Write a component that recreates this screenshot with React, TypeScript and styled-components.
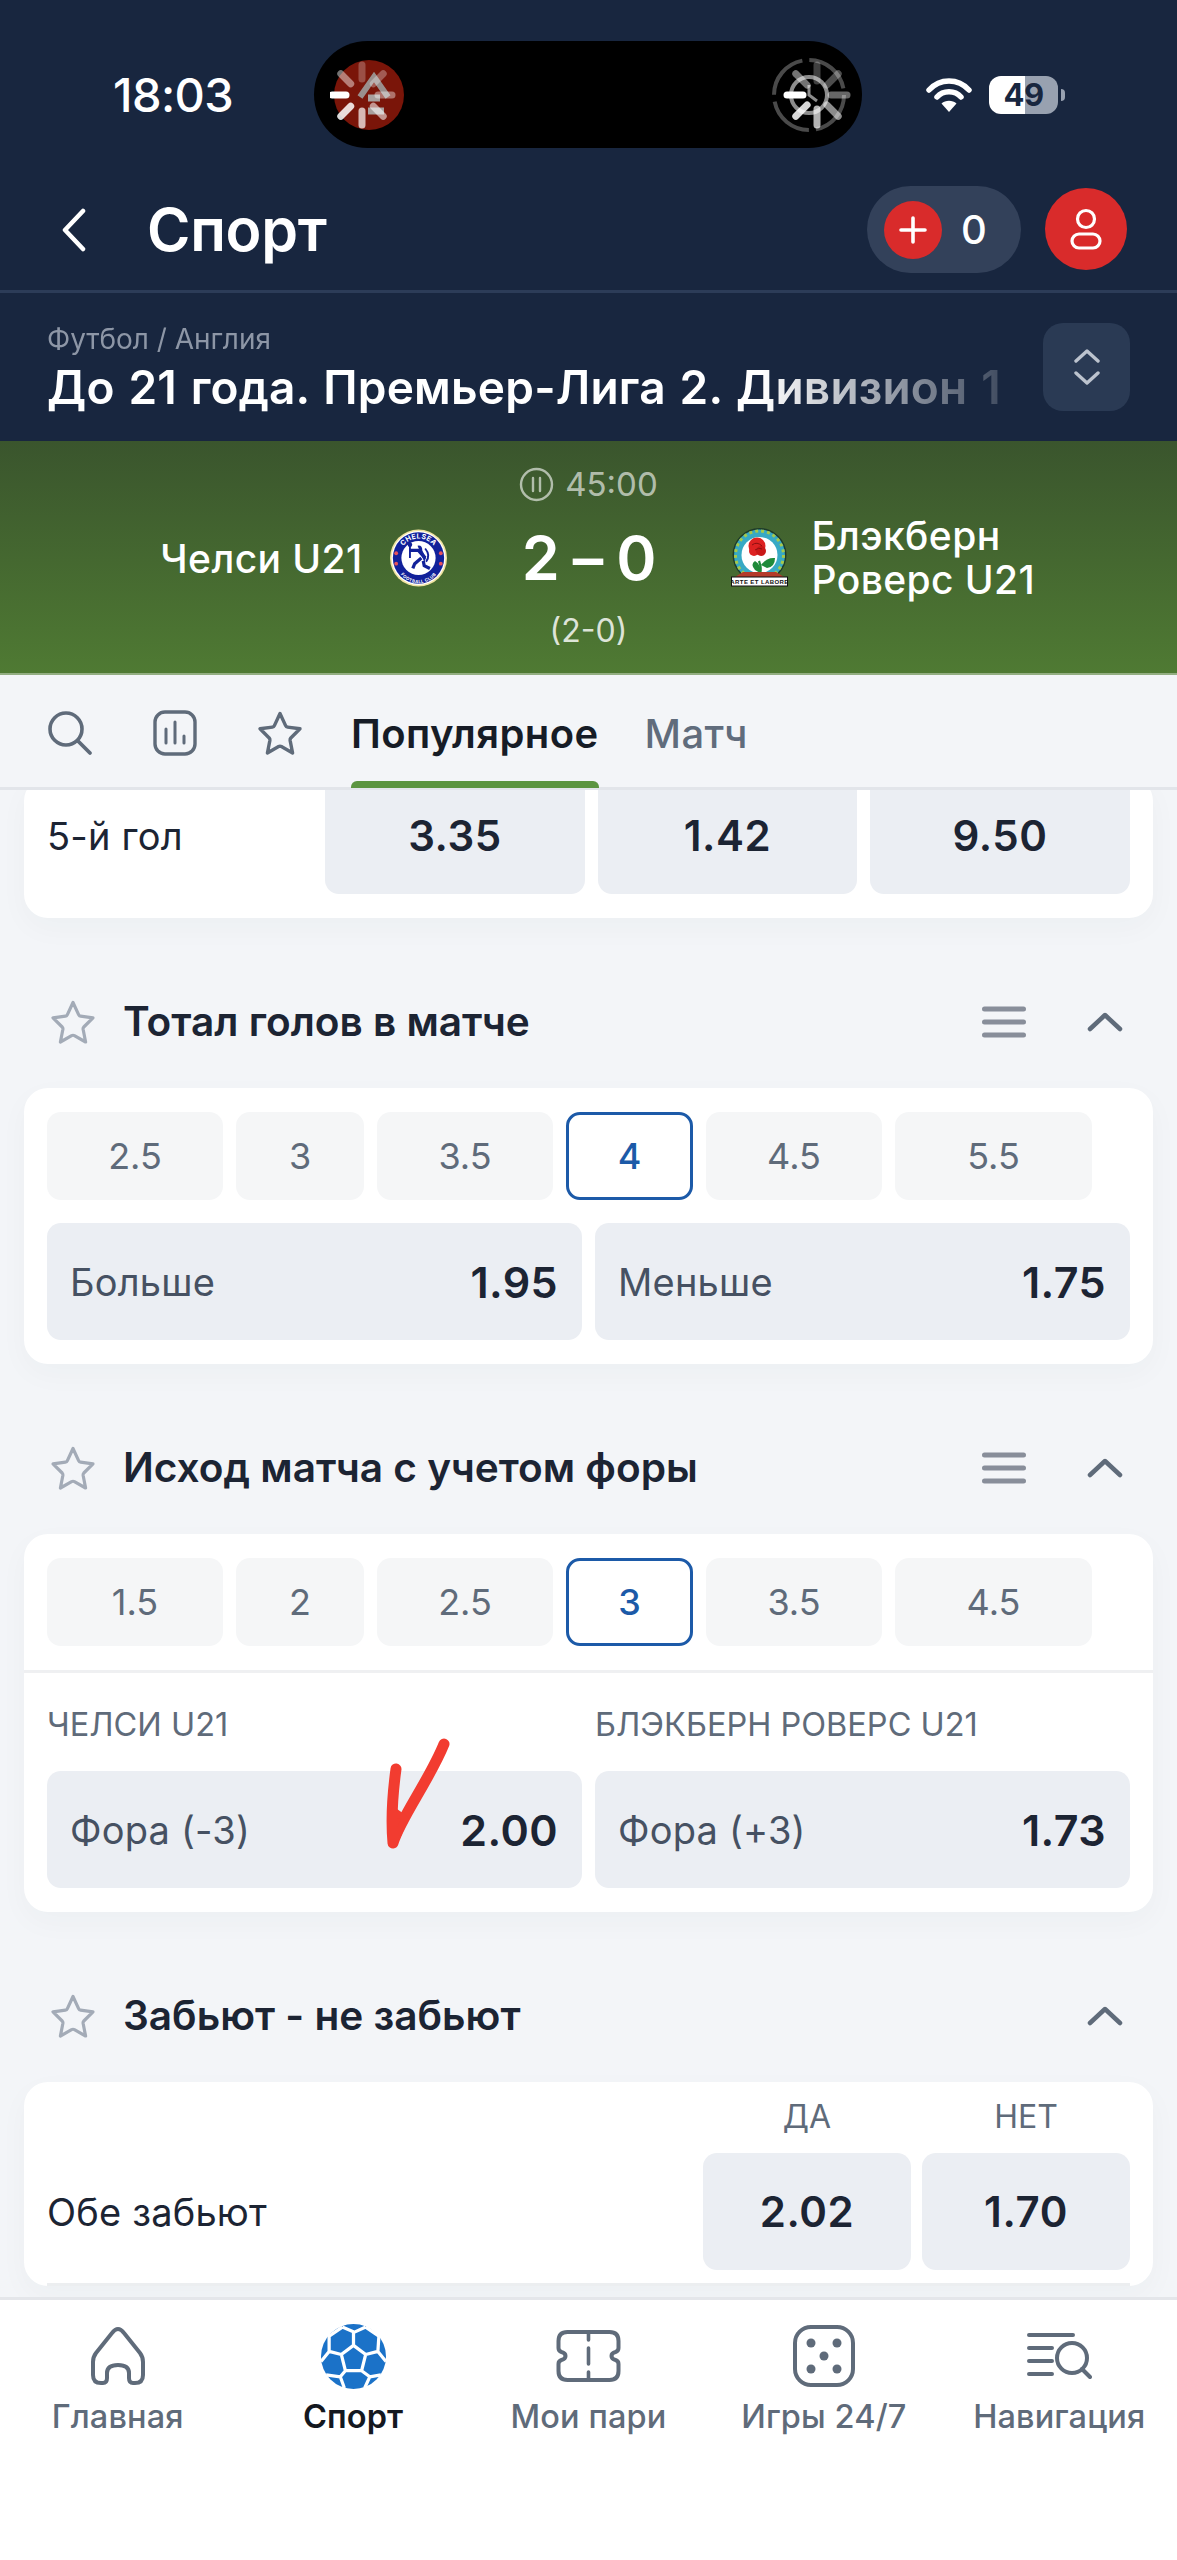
import React from "react";
import styled, { createGlobalStyle } from "styled-components";

const Global = createGlobalStyle`
  * { box-sizing: border-box; }
  html, body { margin: 0; padding: 0; background: #fff; }
  body { font-family: Inter, "Noto Sans", "Liberation Sans", sans-serif; }
`;

const Page = styled.div`
  width: 1177px;
  height: 2560px;
  display: flex;
  flex-direction: column;
  overflow: hidden;
  background: #f3f5f8;
`;

const TopDark = styled.header`
  background: #18263f;
  color: #fff;
  flex: none;
`;

const StatusBar = styled.div`
  height: 170px;
  display: flex;
  align-items: flex-start;
  padding: 41px 0 0 113px;
`;

const Time = styled.div`
  width: 201px;
  font-size: 47px;
  font-weight: 500;
  line-height: 107px;
  letter-spacing: -0.6px;
`;

const Island = styled.div`
  width: 548px;
  height: 107px;
  border-radius: 54px;
  background: #000;
  display: flex;
  align-items: center;
  justify-content: space-between;
  padding: 0 0 0 16px;
`;

const StatusIcons = styled.div`
  height: 107px;
  margin-left: 64px;
  display: flex;
  align-items: center;
  gap: 17px;
`;

const Battery = styled.div`
  position: relative;
  width: 69px;
  height: 38px;
  border-radius: 12px;
  background: linear-gradient(to right, #fff 0 52%, #98a1b0 52% 100%);
  color: #18263f;
  font-size: 31px;
  font-weight: 700;
  display: flex;
  align-items: center;
  justify-content: center;
  letter-spacing: -0.5px;
  &::after {
    content: "";
    position: absolute;
    right: -7px;
    top: 13px;
    width: 4px;
    height: 12px;
    border-radius: 0 4px 4px 0;
    background: #98a1b0;
  }
`;

const NavBar = styled.div`
  height: 123px;
  display: flex;
  align-items: flex-start;
  padding: 16px 50px 0 62px;
  border-bottom: 3px solid #2c3c58;
`;

const BackIcon = styled.svg`
  width: 24px;
  height: 44px;
  margin-top: 22px;
  flex: none;
`;

const PageTitle = styled.h1`
  margin: 0 0 0 61px;
  font-size: 59px;
  line-height: 88px;
  font-weight: 600;
  letter-spacing: -0.3px;
  flex: 1;
`;

const BalancePill = styled.div`
  width: 154px;
  height: 87px;
  border-radius: 44px;
  background: #33415a;
  display: flex;
  align-items: center;
  padding-left: 17px;
  gap: 19px;
  font-size: 40px;
  font-weight: 500;
`;

const RedRound = styled.div<{ $size: number }>`
  width: ${(p) => p.$size}px;
  height: ${(p) => p.$size}px;
  border-radius: 50%;
  background: #d92b2b;
  display: flex;
  align-items: center;
  justify-content: center;
  flex: none;
`;

const ProfileSlot = styled.div`
  margin-left: 24px;
  margin-top: 2px;
`;

const SubHeader = styled.div`
  height: 148px;
  display: flex;
  align-items: flex-start;
  padding: 28px 47px 0 47px;
`;

const CrumbBlock = styled.div`
  width: 965px;
  flex: none;
  white-space: nowrap;
  -webkit-mask-image: linear-gradient(to right, #000 0, #000 74%, rgba(0, 0, 0, 0.14) 100%);
  mask-image: linear-gradient(to right, #000 0, #000 74%, rgba(0, 0, 0, 0.14) 100%);
`;

const Crumb = styled.div`
  font-size: 28px;
  line-height: 36px;
  color: #8d96a6;
`;

const League = styled.div`
  font-size: 46px;
  line-height: 54px;
  margin-top: 3px;
  font-weight: 600;
  letter-spacing: 0.2px;
  word-spacing: 2px;
`;

const ExpandBtn = styled.div`
  width: 87px;
  height: 88px;
  margin: 2px 0 0 31px;
  border-radius: 20px;
  background: #2a3a54;
  display: flex;
  align-items: center;
  justify-content: center;
`;

const Banner = styled.section`
  flex: none;
  height: 234px;
  padding-top: 25px;
  background: linear-gradient(to bottom, #3a552d, #4f7a33);
  border-bottom: 2px solid #93ae82;
  color: #fff;
  display: flex;
  flex-direction: column;
  align-items: center;
`;

const Timer = styled.div`
  height: 36px;
  display: flex;
  align-items: center;
  gap: 11px;
  font-size: 33px;
  color: rgba(255, 255, 255, 0.62);
`;

const ScoreRow = styled.div`
  height: 112px;
  width: 100%;
  display: grid;
  grid-template-columns: 1fr auto 1fr;
  column-gap: 76px;
  align-items: center;
`;

const TeamLeft = styled.div`
  display: flex;
  justify-content: flex-end;
  align-items: center;
  gap: 27px;
  font-size: 39px;
  letter-spacing: 0.4px;
  font-weight: 500;
`;

const TeamRight = styled.div`
  display: flex;
  align-items: center;
  gap: 24px;
  font-size: 39px;
  letter-spacing: 0.4px;
  line-height: 44px;
  font-weight: 500;
`;

const Score = styled.div`
  font-size: 61px;
  font-weight: 600;
  width: 132px;
  display: flex;
  justify-content: center;
  white-space: pre;
  letter-spacing: -1.2px;
`;

const SubScore = styled.div`
  font-size: 32px;
  line-height: 34px;
  color: rgba(255, 255, 255, 0.82);
`;

const Tabs = styled.nav`
  flex: none;
  height: 115px;
  background: #f3f5f8;
  border-bottom: 3px solid #e2e5ea;
  display: flex;
  align-items: center;
  padding: 4px 0 0 47px;
`;

const TabIcon = styled.svg<{ $gap: number }>`
  flex: none;
  margin-right: ${(p) => p.$gap}px;
`;

const Tab = styled.div<{ $active?: boolean }>`
  position: relative;
  height: 100%;
  display: flex;
  align-items: center;
  margin-right: 46px;
  font-size: 40px;
  letter-spacing: 0.4px;
  font-weight: ${(p) => (p.$active ? 600 : 500)};
  color: ${(p) => (p.$active ? "#161c26" : "#606c7c")};
  ${(p) =>
    p.$active
      ? `margin-left: 48px;
  &::after {
    content: "";
    position: absolute;
    left: 0; right: 0; bottom: -1px;
    height: 7px;
    border-radius: 6px 6px 0 0;
    background: #5b9540;
  }`
      : ""}
`;

const Scroller = styled.main`
  flex: 1;
  min-height: 0;
  overflow: hidden;
`;

const ScrollInner = styled.div`
  margin-top: -13px;
  padding: 0 24px;
`;

const Card = styled.div`
  background: #fff;
  border-radius: 24px;
  box-shadow: 0 10px 30px rgba(40, 50, 70, 0.03);
`;

const CardPad = styled.div`
  padding: 24px 23px;
`;

const TopRowPad = styled.div`
  padding: 0 23px 24px;
  display: flex;
  align-items: center;
`;

const RowLabel = styled.div`
  font-size: 38px;
  letter-spacing: 0.2px;
  color: #1c2433;
  flex: 1;
`;

const OddsCell = styled.div<{ $w: number }>`
  width: ${(p) => p.$w}px;
  height: 117px;
  border-radius: 14px;
  background: #ebeef3;
  display: flex;
  align-items: center;
  justify-content: center;
  margin-left: 13px;
  font-size: 42px;
  letter-spacing: 0.6px;
  font-weight: 600;
  color: #1c2433;
  flex: none;
`;

const SectionHead = styled.div`
  margin-top: 37px;
  height: 133px;
  display: flex;
  align-items: center;
  padding-left: 26px;
`;

const SectionTitle = styled.h2`
  margin: 0 0 0 27px;
  flex: 1;
  font-size: 40.6px;
  font-weight: 600;
  color: #1c2433;
`;

const HeadIcon = styled.svg<{ $mr: number }>`
  flex: none;
  margin-right: ${(p) => p.$mr}px;
`;

const Chips = styled.div`
  display: flex;
  gap: 13px;
`;

const Chip = styled.div<{ $w: number; $on?: boolean }>`
  width: ${(p) => p.$w}px;
  height: 88px;
  border-radius: 14px;
  background: ${(p) => (p.$on ? "#fff" : "#f5f6f7")};
  border: ${(p) => (p.$on ? "3px solid #1c5aa8" : "none")};
  color: ${(p) => (p.$on ? "#1c5aa8" : "#5f6b7a")};
  display: flex;
  align-items: center;
  justify-content: center;
  font-size: 36px;
  font-weight: ${(p) => (p.$on ? 500 : 400)};
  flex: none;
`;

const Pair = styled.div<{ $mt: number }>`
  margin-top: ${(p) => p.$mt}px;
  display: grid;
  grid-template-columns: 535px 535px;
  column-gap: 13px;
`;

const OutcomeBtn = styled.div`
  position: relative;
  height: 117px;
  border-radius: 14px;
  background: #ebeef3;
  display: flex;
  align-items: center;
  justify-content: space-between;
  padding: 0 24px 0 23px;
`;

const OutcomeLabel = styled.span`
  font-size: 38px;
  letter-spacing: 0.2px;
  color: #465162;
`;

const OutcomeValue = styled.span`
  font-size: 43px;
  letter-spacing: 0.4px;
  font-weight: 600;
  color: #1c2433;
`;

const Divider = styled.div`
  height: 3px;
  background: #eff0f2;
`;

const TeamCaption = styled.div`
  font-size: 32.5px;
  line-height: 40px;
  color: #5f6b7a;
`;

const CaptionRow = styled.div`
  display: grid;
  grid-template-columns: 535px 535px;
  column-gap: 13px;
  padding: 32px 23px 0;
`;

const PairWrap = styled.div`
  padding: 26px 23px 24px;
`;

const Tick = styled.svg`
  position: absolute;
  left: 337px;
  top: -36px;
  pointer-events: none;
`;

const ColHead = styled.div`
  display: flex;
  justify-content: flex-end;
  padding: 17px 23px 0;
`;

const ColName = styled.div`
  width: 208px;
  margin-left: 11px;
  text-align: center;
  font-size: 32px;
  line-height: 36px;
  color: #5f6b7a;
`;

const BothRow = styled.div`
  display: flex;
  align-items: center;
  padding: 18px 23px 13px;
`;

const YesNoCell = styled(OddsCell)`
  margin-left: 11px;
`;

const RowRule = styled.div`
  height: 3px;
  margin: 0 23px 16px;
  background: #eceef0;
`;

const BottomNav = styled.footer`
  flex: none;
  height: 263px;
  background: #fff;
  border-top: 3px solid #e4e6ea;
  display: grid;
  grid-template-columns: repeat(5, 1fr);
  padding-top: 21px;
  align-items: start;
`;

const NavItem = styled.div<{ $active?: boolean }>`
  display: flex;
  flex-direction: column;
  align-items: center;
  font-size: 32.5px;
  letter-spacing: 0.1px;
  line-height: 40px;
  white-space: nowrap;
  font-weight: ${(p) => (p.$active ? 600 : 500)};
  color: ${(p) => (p.$active ? "#14181f" : "#5f6b7a")};
`;

const NavIconBox = styled.div`
  height: 70px;
  margin-bottom: 6px;
  display: flex;
  align-items: center;
  justify-content: center;
`;

const Spinner = ({ cx, r0, r1, size }: { cx: number; r0: number; r1: number; size: number }) => {
  const ops = [1, 0.85, 0.7, 0.55, 0.4, 0.3, 0.25, 0.45];
  return (
    <>
      {ops.map((o, i) => {
        const a = Math.PI + (-i * Math.PI) / 4;
        return (
          <line
            key={i}
            x1={cx + Math.cos(a) * r0}
            y1={size / 2 + Math.sin(a) * r0}
            x2={cx + Math.cos(a) * r1}
            y2={size / 2 + Math.sin(a) * r1}
            stroke="#fff"
            strokeOpacity={o}
            strokeWidth={7}
            strokeLinecap="round"
          />
        );
      })}
    </>
  );
};

const StarPath = "M23 3.5 L28.6 15.6 Q29.2 16.9 30.6 17.1 L43 18.8 L33.8 28 Q32.9 29 33.1 30.3 L35.6 43 L24.4 36.6 Q23 35.9 21.6 36.6 L10.4 43 L12.9 30.3 Q13.1 29 12.2 28 L3 18.8 L15.4 17.1 Q16.8 16.9 17.4 15.6 Z";

const Star = ({ color, w }: { color: string; w: number }) => (
  <svg width="46" height="46" viewBox="0 0 46 46" fill="none" style={{ flex: "none" }}>
    <path d={StarPath} stroke={color} strokeWidth={w} strokeLinejoin="round" />
  </svg>
);

const ChelseaCrest = () => (
  <svg width="57" height="58" viewBox="0 0 60 60">
    <circle cx="30" cy="30" r="30" fill="#f1e3a0" />
    <circle cx="30" cy="30" r="28.4" fill="#fff" />
    <circle cx="30" cy="30" r="27" fill="#11219a" />
    <circle cx="30" cy="30" r="18" fill="#fff" />
    <path d="M21 17V30" stroke="#11219a" strokeWidth="2" />
    <circle cx="21" cy="16" r="2.4" fill="#11219a" />
    <path d="M21 22H30L37 30" stroke="#11219a" strokeWidth="3.6" fill="none" />
    <path d="M29 17Q34 16 34 22L38 30L36 34" fill="#11219a" />
    <path d="M37 20Q43 27 38 34" stroke="#11219a" strokeWidth="2" fill="none" />
    <path d="M33 30L26 36L24 41M35 33L36 38L42 41" stroke="#11219a" strokeWidth="3.4" fill="none" />
    <circle cx="6.5" cy="25" r="2" fill="#e8525b" />
    <circle cx="53.5" cy="25" r="2" fill="#e8525b" />
    <circle cx="6.5" cy="36" r="2" fill="#e8525b" />
    <circle cx="53.5" cy="36" r="2" fill="#e8525b" />
    <defs>
      <path id="cTop" d="M9.5 30 A20.5 20.5 0 0 1 50.5 30" />
      <path id="cBot" d="M6.5 33 A23.5 23.5 0 0 0 53.5 33" />
    </defs>
    <text fontSize="7.4" fontWeight="700" fill="#fff" fontFamily="Inter, sans-serif" textAnchor="middle">
      <textPath href="#cTop" startOffset="50%">CHELSEA</textPath>
    </text>
    <text fontSize="4.6" fontWeight="700" fill="#fff" fontFamily="Inter, sans-serif" textAnchor="middle">
      <textPath href="#cBot" startOffset="50%">FOOTBALL CLUB</textPath>
    </text>
  </svg>
);

const BlackburnCrest = () => (
  <svg width="57" height="60" viewBox="0 0 57 60">
    <circle cx="28.5" cy="27" r="27" fill="#1e3a2a" />
    <circle cx="28.5" cy="27" r="25.5" fill="#37a9c4" />
    <circle cx="28.5" cy="27" r="24" fill="none" stroke="#a6c94a" strokeWidth="3" strokeDasharray="3 3" />
    <circle cx="28.5" cy="27" r="18" fill="#fff" />
    <path d="M28 33 Q31 41 29 46" stroke="#1f8a3a" strokeWidth="2.2" fill="none" />
    <path d="M30 37 Q36 29 44 30 Q44 39 36 40 Z" fill="#1f8a3a" />
    <path d="M24 42 Q19 36 24 33 Q31 37 29 45 Z" fill="#1f8a3a" />
    <circle cx="26" cy="18" r="8.5" fill="#dd2222" />
    <circle cx="23" cy="23" r="5" fill="#dd2222" />
    <circle cx="30" cy="23" r="5" fill="#c91818" />
    <path d="M21 17 Q26 13 31 18 M24 22 Q28 19 31 21" stroke="#8a1010" strokeWidth="1" fill="none" />
    <path d="M4 49 L12 44 L45 44 L53 49 Z" fill="#b43a2a" />
    <rect x="0.5" y="49" width="56" height="9" fill="#fff" stroke="#111" strokeWidth="1" />
    <text x="28.5" y="56" fontSize="6" textAnchor="middle" fill="#111" fontFamily="Liberation Sans, sans-serif" fontWeight="700">ARTE ET LABORE</text>
  </svg>
);

const SectionHeader = ({ title, menu }: { title: string; menu?: boolean }) => (
  <SectionHead>
    <Star color="#a3abb7" w={3.2} />
    <SectionTitle>{title}</SectionTitle>
    {menu && (
      <HeadIcon $mr={61} width="44" height="32" viewBox="0 0 44 32">
        <path d="M2.5 3H41.5M2.5 16H41.5M2.5 29H41.5" stroke="#888e9a" strokeWidth="5" strokeLinecap="round" />
      </HeadIcon>
    )}
    <HeadIcon $mr={30} width="36" height="20" viewBox="0 0 36 20">
      <path d="M3 17L18 3L33 17" stroke="#5f6b7a" strokeWidth="4.5" strokeLinecap="round" strokeLinejoin="round" fill="none" />
    </HeadIcon>
  </SectionHead>
);

const ChipRow = ({ values, on }: { values: string[]; on: number }) => {
  const widths = [176, 128, 176, 127, 176, 197];
  return (
    <Chips>
      {values.map((v, i) => (
        <Chip key={v} $w={widths[i]} $on={i === on}>
          {v}
        </Chip>
      ))}
    </Chips>
  );
};

export default function App() {
  return (
    <Page>
      <Global />
      <TopDark>
        <StatusBar>
          <Time>18:03</Time>
          <Island>
            <svg width="84" height="84" viewBox="0 0 84 84">
              <circle cx="39" cy="42" r="35" fill="#7a1509" />
              <path d="M30 44 L44 24 L58 44" stroke="#9a8f8d" strokeWidth="6" fill="none" />
              <path d="M38 45H50M38 58H54" stroke="#a8a09e" strokeWidth="7" fill="none" />
              <Spinner cx={32} r0={16} r1={30} size={84} />
            </svg>
            <svg width="90" height="84" viewBox="0 0 90 84">
              <circle cx="37" cy="42" r="35" fill="none" stroke="#4a4a4a" strokeWidth="4" strokeDasharray="48 7" />
              <circle cx="37" cy="42" r="18" fill="none" stroke="#8c8c8c" strokeWidth="4" />
              <path d="M37 32V42L45 48" stroke="#8c8c8c" strokeWidth="3" fill="none" />
              <Spinner cx={45} r0={14} r1={30} size={84} />
            </svg>
          </Island>
          <StatusIcons>
            <svg width="46" height="36" viewBox="0 0 46 36" fill="none">
              <path d="M3 13C14 1 32 1 43 13" stroke="#fff" strokeWidth="5.5" strokeLinecap="round" />
              <path d="M11 20C17 13 29 13 35 20" stroke="#fff" strokeWidth="5.5" strokeLinecap="round" />
              <path d="M23 35L15.5 26.5C19.5 22.8 26.5 22.8 30.5 26.5Z" fill="#fff" />
            </svg>
            <Battery>49</Battery>
          </StatusIcons>
        </StatusBar>
        <NavBar>
          <BackIcon viewBox="0 0 24 44" fill="none">
            <path d="M21 3L3 22L21 41" stroke="#fff" strokeWidth="4.5" strokeLinecap="round" strokeLinejoin="round" />
          </BackIcon>
          <PageTitle>Спорт</PageTitle>
          <BalancePill>
            <RedRound $size={58}>
              <svg width="30" height="30" viewBox="0 0 30 30">
                <path d="M15 3V27M3 15H27" stroke="#fff" strokeWidth="3.6" strokeLinecap="round" />
              </svg>
            </RedRound>
            0
          </BalancePill>
          <ProfileSlot>
            <RedRound $size={82}>
              <svg width="34" height="42" viewBox="0 0 34 42" fill="none">
                <circle cx="17" cy="11" r="8.5" stroke="#fff" strokeWidth="3.2" />
                <rect x="3" y="26" width="28" height="14" rx="7" stroke="#fff" strokeWidth="3.2" />
              </svg>
            </RedRound>
          </ProfileSlot>
        </NavBar>
        <SubHeader>
          <CrumbBlock>
            <Crumb>Футбол / Англия</Crumb>
            <League>До 21 года. Премьер-Лига 2. Дивизион 1</League>
          </CrumbBlock>
          <ExpandBtn>
            <svg width="26" height="36" viewBox="0 0 26 36" fill="none">
              <path d="M2 12L13 2L24 12M2 24L13 34L24 24" stroke="#bcc3ce" strokeWidth="3.4" strokeLinecap="round" strokeLinejoin="round" />
            </svg>
          </ExpandBtn>
        </SubHeader>
      </TopDark>

      <Banner>
        <Timer>
          <svg width="35" height="35" viewBox="0 0 35 35" fill="none">
            <circle cx="17.5" cy="17.5" r="15.5" stroke="#fff" strokeOpacity="0.6" strokeWidth="2.4" />
            <path d="M14 11V24M21 11V24" stroke="#fff" strokeOpacity="0.6" strokeWidth="2.4" strokeLinecap="round" />
          </svg>
          45:00
        </Timer>
        <ScoreRow>
          <TeamLeft>
            Челси U21
            <ChelseaCrest />
          </TeamLeft>
          <Score>2 – 0</Score>
          <TeamRight>
            <BlackburnCrest />
            <div>
              Блэкберн
              <br />
              Роверс U21
            </div>
          </TeamRight>
        </ScoreRow>
        <SubScore>(2-0)</SubScore>
      </Banner>

      <Tabs>
        <TabIcon $gap={60} width="46" height="46" viewBox="0 0 46 46" fill="none">
          <circle cx="19" cy="19" r="16" stroke="#5f6b7a" strokeWidth="3.6" />
          <path d="M31 31L43 43" stroke="#5f6b7a" strokeWidth="3.8" strokeLinecap="round" />
        </TabIcon>
        <TabIcon $gap={60} width="44" height="46" viewBox="0 0 44 46" fill="none">
          <rect x="2" y="2" width="40" height="42" rx="10" stroke="#5f6b7a" strokeWidth="3.4" />
          <path d="M13 19V33M22 12V33M31 26V33" stroke="#5f6b7a" strokeWidth="3" strokeLinecap="round" />
        </TabIcon>
        <Star color="#5f6b7a" w={3.4} />
        <Tab $active>Популярное</Tab>
        <Tab>Матч</Tab>
      </Tabs>

      <Scroller>
        <ScrollInner>
          <Card>
            <TopRowPad>
              <RowLabel>5-й гол</RowLabel>
              <OddsCell $w={260}>3.35</OddsCell>
              <OddsCell $w={259}>1.42</OddsCell>
              <OddsCell $w={260}>9.50</OddsCell>
            </TopRowPad>
          </Card>

          <SectionHeader title="Тотал голов в матче" menu />
          <Card>
            <CardPad>
              <ChipRow values={["2.5", "3", "3.5", "4", "4.5", "5.5"]} on={3} />
              <Pair $mt={23}>
                <OutcomeBtn>
                  <OutcomeLabel>Больше</OutcomeLabel>
                  <OutcomeValue>1.95</OutcomeValue>
                </OutcomeBtn>
                <OutcomeBtn>
                  <OutcomeLabel>Меньше</OutcomeLabel>
                  <OutcomeValue>1.75</OutcomeValue>
                </OutcomeBtn>
              </Pair>
            </CardPad>
          </Card>

          <SectionHeader title="Исход матча с учетом форы" menu />
          <Card>
            <CardPad>
              <ChipRow values={["1.5", "2", "2.5", "3", "3.5", "4.5"]} on={3} />
            </CardPad>
            <Divider />
            <CaptionRow>
              <TeamCaption>ЧЕЛСИ U21</TeamCaption>
              <TeamCaption>БЛЭКБЕРН РОВЕРС U21</TeamCaption>
            </CaptionRow>
            <PairWrap>
              <Pair $mt={0}>
                <OutcomeBtn>
                  <OutcomeLabel>Фора (-3)</OutcomeLabel>
                  <OutcomeValue>2.00</OutcomeValue>
                  <Tick width="70" height="120" viewBox="0 0 70 120" fill="none">
                    <path d="M12 34C9 56 7 86 9 108C16 84 46 44 60 9" stroke="#f23c30" strokeWidth="11" strokeLinecap="round" strokeLinejoin="round" />
                    <path d="M10 76L10 108L21 84Z" fill="#f23c30" stroke="#f23c30" strokeWidth="7" strokeLinejoin="round" />
                  </Tick>
                </OutcomeBtn>
                <OutcomeBtn>
                  <OutcomeLabel>Фора (+3)</OutcomeLabel>
                  <OutcomeValue>1.73</OutcomeValue>
                </OutcomeBtn>
              </Pair>
            </PairWrap>
          </Card>

          <SectionHeader title="Забьют - не забьют" />
          <Card>
            <ColHead>
              <ColName>ДА</ColName>
              <ColName>НЕТ</ColName>
            </ColHead>
            <BothRow>
              <RowLabel>Обе забьют</RowLabel>
              <YesNoCell $w={208}>2.02</YesNoCell>
              <YesNoCell $w={208}>1.70</YesNoCell>
            </BothRow>
            <RowRule />
          </Card>
        </ScrollInner>
      </Scroller>

      <BottomNav>
        <NavItem>
          <NavIconBox>
            <svg width="56" height="60" viewBox="0 0 56 60" fill="none">
              <path d="M28 3Q25 3 22 7L6 27Q3 31 3 36V49Q3 57 11 57H13Q17 57 17 52V47Q17 39 28 39Q39 39 39 47V52Q39 57 43 57H45Q53 57 53 49V36Q53 31 50 27L34 7Q31 3 28 3Z" stroke="#5f6b7a" strokeWidth="4" strokeLinejoin="round" />
            </svg>
          </NavIconBox>
          Главная
        </NavItem>
        <NavItem $active>
          <NavIconBox>
            <svg width="65" height="65" viewBox="0 0 64 64" fill="none">
              <circle cx="32" cy="32" r="32" fill="#1b72c8" />
              <path d="M32 21L44 30L40 46H24L20 30ZM32 21L32 8M33 8L21 3M33 8L44 3M44 3L57 12L56 27L44 30M56 27L64 37M40 46L48 52L59 50M48 52L43 63M24 46L19 52L23 63M19 52L5 50M20 30L8 27L0 37M8 27L8 12L21 3" stroke="#fff" strokeWidth="3.2" strokeLinejoin="round" />
            </svg>
          </NavIconBox>
          Спорт
        </NavItem>
        <NavItem>
          <NavIconBox>
            <svg width="65" height="52" viewBox="0 0 64 52" fill="none">
              <path d="M11 2H53Q62 2 62 11V18Q62 21 59 22Q55 23 55 26Q55 29 59 30Q62 31 62 34V41Q62 50 53 50H11Q2 50 2 41V34Q2 31 5 30Q9 29 9 26Q9 23 5 22Q2 21 2 18V11Q2 2 11 2Z" stroke="#5f6b7a" strokeWidth="4" strokeLinejoin="round" />
              <path d="M32 2V10M32 18V34M32 42V50" stroke="#5f6b7a" strokeWidth="3.6" strokeLinecap="round" />
            </svg>
          </NavIconBox>
          Мои пари
        </NavItem>
        <NavItem>
          <NavIconBox>
            <svg width="62" height="62" viewBox="0 0 62 62" fill="none">
              <rect x="2" y="2" width="58" height="58" rx="16" stroke="#5f6b7a" strokeWidth="4" />
              <circle cx="18" cy="18" r="4.5" fill="#5f6b7a" />
              <circle cx="44" cy="18" r="4.5" fill="#5f6b7a" />
              <circle cx="31" cy="31" r="4.5" fill="#5f6b7a" />
              <circle cx="18" cy="44" r="4.5" fill="#5f6b7a" />
              <circle cx="44" cy="44" r="4.5" fill="#5f6b7a" />
            </svg>
          </NavIconBox>
          Игры 24/7
        </NavItem>
        <NavItem>
          <NavIconBox>
            <svg width="66" height="48" viewBox="0 0 66 48" fill="none">
              <path d="M3 3H47M3 16H26M3 29H26M3 42H26" stroke="#5f6b7a" strokeWidth="4" strokeLinecap="round" />
              <circle cx="46" cy="26" r="15" stroke="#5f6b7a" strokeWidth="4" />
              <path d="M56 37L64 45" stroke="#5f6b7a" strokeWidth="4" strokeLinecap="round" />
            </svg>
          </NavIconBox>
          Навигация
        </NavItem>
      </BottomNav>
    </Page>
  );
}
